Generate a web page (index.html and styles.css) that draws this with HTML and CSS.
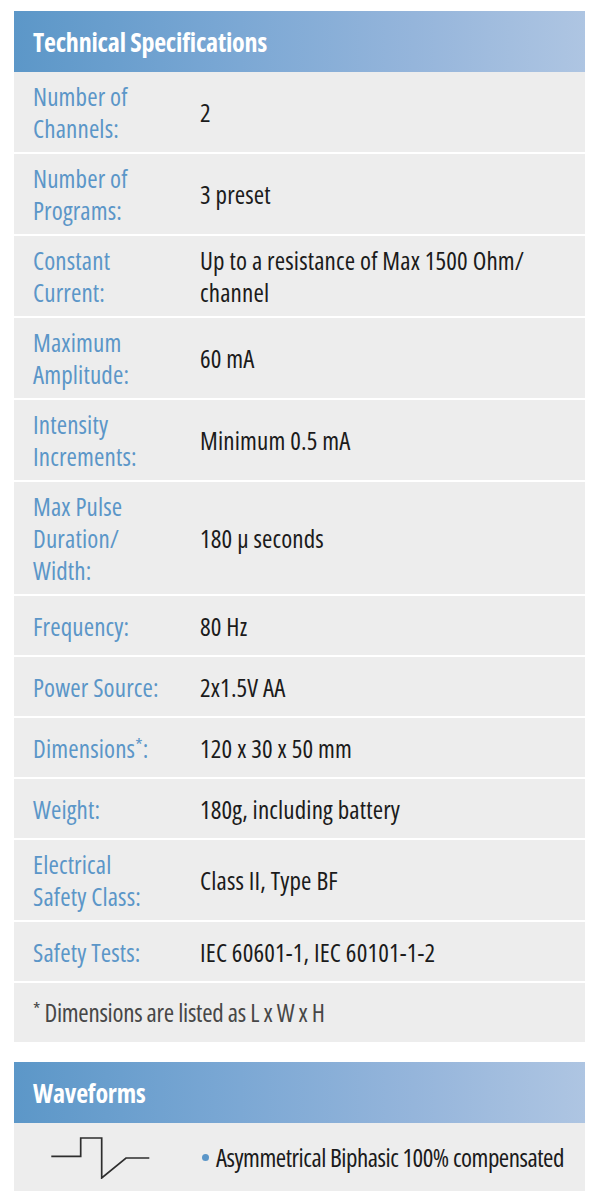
FILE: index.html
```html
<!DOCTYPE html>
<html>
<head>
<meta charset="utf-8">
<link rel="stylesheet" href="styles.css">
</head>
<body>
<section class="panel">
  <h2 class="panel-head">Technical Specifications</h2>
  <div class="rows">
    <div class="row"><div class="label">Number of<br>Channels:</div><div class="value">2</div></div>
    <div class="row"><div class="label">Number of<br>Programs:</div><div class="value">3 preset</div></div>
    <div class="row"><div class="label">Constant<br>Current:</div><div class="value">Up to a resistance of Max 1500 Ohm/<br>channel</div></div>
    <div class="row"><div class="label">Maximum<br>Amplitude:</div><div class="value">60 mA</div></div>
    <div class="row"><div class="label">Intensity<br>Increments:</div><div class="value">Minimum 0.5 mA</div></div>
    <div class="row"><div class="label">Max Pulse<br>Duration/<br>Width:</div><div class="value">180 µ seconds</div></div>
    <div class="row"><div class="label">Frequency:</div><div class="value">80 Hz</div></div>
    <div class="row"><div class="label">Power Source:</div><div class="value">2x1.5V AA</div></div>
    <div class="row"><div class="label">Dimensions<span class="ast">*</span>:</div><div class="value">120 x 30 x 50 mm</div></div>
    <div class="row"><div class="label">Weight:</div><div class="value">180g, including battery</div></div>
    <div class="row"><div class="label">Electrical<br>Safety Class:</div><div class="value">Class II, Type BF</div></div>
    <div class="row"><div class="label">Safety Tests:</div><div class="value">IEC 60601-1, IEC 60101-1-2</div></div>
    <div class="row note"><span class="ast">*</span> Dimensions are listed as L x W x H</div>
  </div>
</section>

<section class="panel wave-panel">
  <h2 class="panel-head">Waveforms</h2>
  <div class="rows">
    <div class="row wave-row">
      <div class="wave-icon">
        <svg width="100" height="42" viewBox="0 0 100 42" aria-hidden="true">
          <polyline points="1.3,19.3 30.7,19.3 30.7,1 51.7,1 51.7,41 76,21 99.3,21" fill="none" stroke="#2e2e2e" stroke-width="1.7" stroke-linejoin="miter"/>
        </svg>
      </div>
      <div class="value wave-text"><span class="bullet"></span>Asymmetrical Biphasic 100% compensated</div>
    </div>
  </div>
</section>
</body>
</html>
```
FILE: styles.css
```css
html, body {
  margin: 0;
  padding: 0;
  background: #ffffff;
}

body {
  font-family: "Open Sans", "Liberation Sans", sans-serif;
  font-stretch: 75%;
  padding-top: 11px;
}

.panel {
  margin-left: 14px;
  width: 571px;
}

.panel-head {
  margin: 0;
  height: 61px;
  display: flex;
  align-items: center;
  padding-left: 19px;
  box-sizing: border-box;
  color: #ffffff;
  font-size: 26px;
  font-weight: 700;
  letter-spacing: -0.2px;
  background: linear-gradient(90deg, #5c97c8 0%, #78a6d3 35%, #95b5db 70%, #aec5e2 100%);
}

.rows {
  display: flex;
  flex-direction: column;
  gap: 2px;
}

.row {
  display: grid;
  grid-template-columns: 186px 1fr;
  align-items: center;
  min-height: 59px;
  padding: 8px 0;
  box-sizing: border-box;
  background: #ededed;
  font-size: 25px;
  font-weight: 380;
  line-height: 32px;
  letter-spacing: 0.15px;
}

.label {
  padding-left: 19px;
  color: #5b96c8;
}

.value {
  color: #1b1b1b;
}

.ast {
  font-size: 0.75em;
  vertical-align: 0.3em;
  line-height: 0;
}

.row.note {
  display: block;
  padding-left: 19px;
  color: #474747;
  line-height: 43px;
  letter-spacing: -0.28px;
}

.wave-panel {
  margin-top: 20px;
}

.wave-row {
  min-height: 68px;
  padding: 0;
}

.wave-icon {
  display: flex;
  padding-left: 36px;
  padding-top: 1px;
}

.wave-icon svg {
  display: block;
}

.wave-text {
  letter-spacing: -0.48px;
}

.bullet {
  display: inline-block;
  width: 7px;
  height: 7px;
  border-radius: 50%;
  background: #5b96c8;
  margin-left: 2px;
  margin-right: 7px;
  vertical-align: 0.25em;
}
```
